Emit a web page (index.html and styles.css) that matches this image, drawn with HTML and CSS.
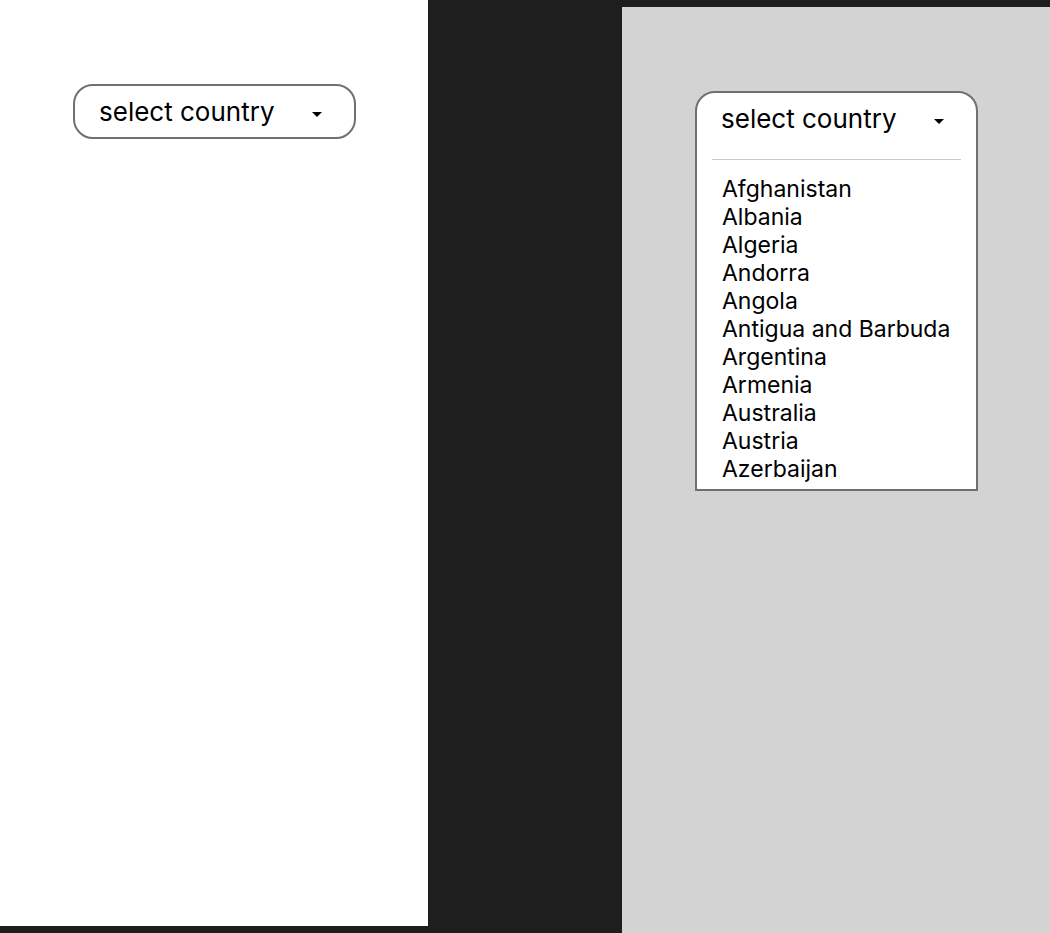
FILE: index.html
```html
<!DOCTYPE html>
<html>
<head>
<meta charset="utf-8">
<link rel="stylesheet" href="styles.css">
</head>
<body>
<div class="stage">
  <section class="panel panel-light">
    <div class="select">
      <span class="select-label">select country</span>
      <span class="caret"></span>
    </div>
  </section>
  <section class="panel panel-gray">
    <div class="dropdown">
      <div class="dropdown-head">
        <span class="select-label">select country</span>
        <span class="caret"></span>
      </div>
      <div class="divider"></div>
      <ul class="options">
        <li>Afghanistan</li>
        <li>Albania</li>
        <li>Algeria</li>
        <li>Andorra</li>
        <li>Angola</li>
        <li>Antigua and Barbuda</li>
        <li>Argentina</li>
        <li>Armenia</li>
        <li>Australia</li>
        <li>Austria</li>
        <li>Azerbaijan</li>
      </ul>
    </div>
  </section>
</div>
</body>
</html>
```
FILE: styles.css
```css
html, body {
  margin: 0;
  padding: 0;
  background: #1e1e1e;
  font-family: Inter, "Noto Sans", sans-serif;
  color: #000;
}
.stage {
  width: 1050px;
  height: 933px;
  display: flex;
  justify-content: space-between;
  align-items: flex-start;
  overflow: hidden;
}
.panel {
  width: 428px;
  height: 926px;
  box-sizing: border-box;
}
.panel-light {
  background: #ffffff;
  padding: 84px 0 0 73px;
}
.panel-gray {
  background: #d3d3d3;
  margin-top: 7px;
  padding: 84px 0 0 73px;
}
.select {
  width: 283px;
  height: 55px;
  box-sizing: border-box;
  border: 2px solid #707070;
  border-radius: 20px;
  display: flex;
  align-items: center;
  padding: 0 32px 0 24px;
  justify-content: space-between;
  background: #fff;
}
.select-label {
  font-size: 26px;
  line-height: 30px;
}
.caret {
  width: 0;
  height: 0;
  border-left: 5px solid transparent;
  border-right: 5px solid transparent;
  border-top: 5px solid #000;
  margin-top: 6px;
}
.dropdown {
  width: 283px;
  height: 400px;
  box-sizing: border-box;
  border: 2px solid #707070;
  border-radius: 20px 20px 0 0;
  background: #fff;
  padding: 0 15px;
}
.dropdown-head {
  height: 55px;
  display: flex;
  align-items: center;
  padding: 0 17px 0 9px;
  justify-content: space-between;
  margin-top: -2px;
}
.divider {
  height: 1px;
  background: #c8c8c8;
  margin-top: 13px;
}
.options {
  list-style: none;
  margin: 15px 0 0 0;
  padding: 0 0 0 10px;
}
.options li {
  font-size: 23px;
  line-height: 28px;
}
```
